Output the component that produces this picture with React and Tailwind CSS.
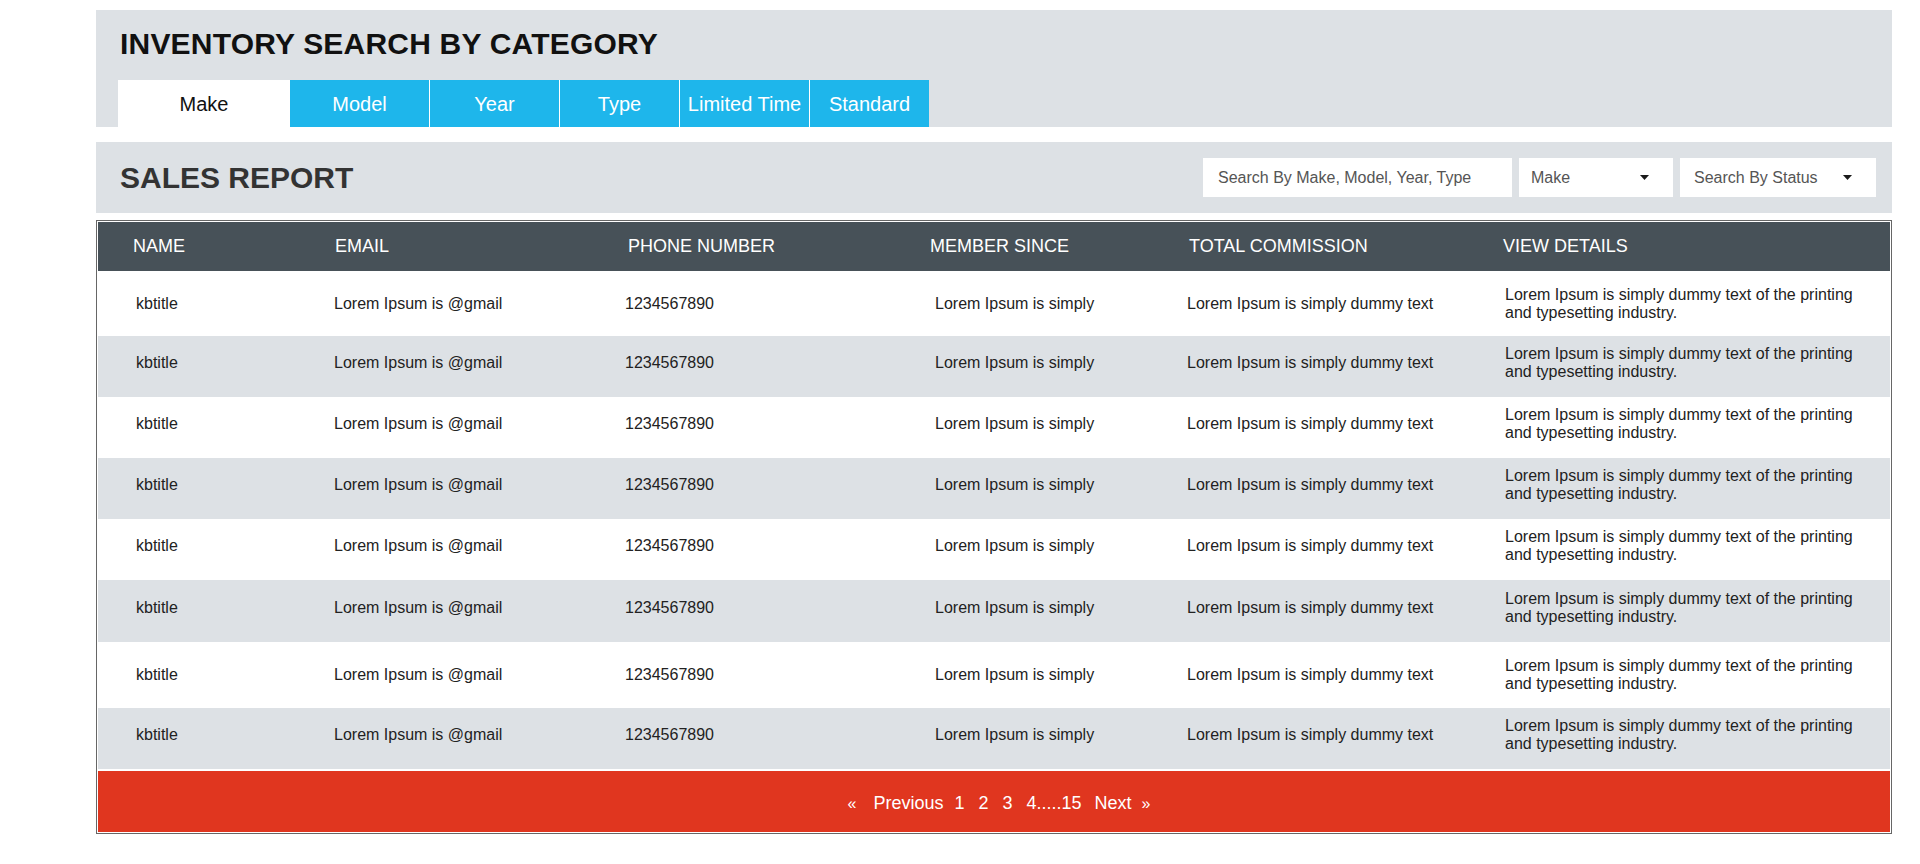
import { useState } from "react";

const tabs = [
  { label: "Make", width: "w-[172px]" },
  { label: "Model", width: "w-[139px]" },
  { label: "Year", width: "w-[130px]" },
  { label: "Type", width: "w-[120px]" },
  { label: "Limited Time", width: "w-[130px]" },
  { label: "Standard", width: "w-[120px]" },
];

const headers = [
  { label: "NAME", pad: "pl-[35px]" },
  { label: "EMAIL", pad: "pl-[1px]" },
  { label: "PHONE NUMBER", pad: "pl-[3px]" },
  { label: "MEMBER SINCE", pad: "pl-[2px]" },
  { label: "TOTAL COMMISSION", pad: "pl-[2px]" },
  { label: "VIEW DETAILS", pad: "pl-0" },
];

// row heights differ slightly in the design
const rows = [
  "h-[65px]",
  "h-[61px] pb-[7px]",
  "h-[61px] pb-[7px]",
  "h-[61px] pb-[7px]",
  "h-[61px] pb-[7px]",
  "h-[62px] pb-[7px]",
  "h-[66px]",
  "h-[61px] pb-[7px]",
];

const cols = "grid grid-cols-[236px_291px_303px_259px_316px_1fr]";

const Caret = () => (
  <svg width="9" height="5" viewBox="0 0 9 5" className="shrink-0">
    <path d="M0 0h9L4.5 5z" fill="#1a1a1a" />
  </svg>
);

const App = () => {
  const [active, setActive] = useState("Make");
  const [query, setQuery] = useState("");

  return (
    <div className="min-h-screen bg-white pl-[96px] pr-[28px] pt-[10px] font-['Liberation_Sans',Arial,sans-serif]">
      {/* category panel */}
      <div className="bg-[#dde1e5] px-[22px] pt-[16px]">
        <h1 className="ml-[2px] text-[30px] leading-[36px] font-bold tracking-[0.2px] text-[#111]">
          INVENTORY SEARCH BY CATEGORY
        </h1>
        <div className="mt-[18px] flex h-[47px]">
          {tabs.map((tab, i) => (
            <button
              key={tab.label}
              onClick={() => setActive(tab.label)}
              className={`${tab.width} h-full flex items-center justify-center text-[20px] ${
                active === tab.label
                  ? "bg-white text-[#111]"
                  : "bg-[#1eb6eb] text-white"
              } ${i > 1 ? "border-l border-white" : ""}`}
            >
              {tab.label}
            </button>
          ))}
        </div>
      </div>

      {/* sales report header */}
      <div className="mt-[15px] h-[71px] bg-[#dde1e5] pl-[24px] pr-[16px] flex items-center justify-between">
        <h2 className="text-[30px] font-bold text-[#333]">SALES REPORT</h2>
        <div className="flex items-center gap-[7px]">
          <input
            value={query}
            onChange={(e) => setQuery(e.target.value)}
            placeholder="Search By Make, Model, Year, Type"
            className="w-[309px] h-[39px] bg-white px-[15px] text-[16px] text-[#555] placeholder:text-[#555] outline-none"
          />
          <div className="w-[154px] h-[39px] bg-white pl-[12px] pr-[24px] flex items-center justify-between text-[16px] text-[#555]">
            <span>Make</span>
            <Caret />
          </div>
          <div className="w-[196px] h-[39px] bg-white pl-[14px] pr-[24px] flex items-center justify-between text-[16px] text-[#555]">
            <span>Search By Status</span>
            <Caret />
          </div>
        </div>
      </div>

      {/* table */}
      <div className="mt-[7px] border border-[#666] bg-white p-px">
        <div className={`${cols} h-[49px] items-center bg-[#475158] text-white text-[18px]`}>
          {headers.map((h) => (
            <div key={h.label} className={h.pad}>
              {h.label}
            </div>
          ))}
        </div>

        {rows.map((h, i) => (
          <div
            key={i}
            className={`${cols} ${h} items-center text-[16px] text-[#222] ${
              i % 2 === 1 ? "bg-[#dde1e5]" : "bg-white"
            }`}
          >
            <div className="pl-[38px]">kbtitle</div>
            <div>Lorem Ipsum is @gmail</div>
            <div>1234567890</div>
            <div className="pl-[7px]">Lorem Ipsum is simply</div>
            <div>Lorem Ipsum is simply dummy text</div>
            <div className="pl-[2px] w-[372px] leading-[18px]">
              Lorem Ipsum is simply dummy text of the printing and typesetting industry.
            </div>
          </div>
        ))}

        <div className="mt-[2px] h-[61px] pt-[4px] pl-[10px] bg-[#e0361f] flex items-center justify-center text-white text-[18px]">
          <span className="text-[16px] mr-[17px]">«</span>
          <span className="mr-[11px]">Previous</span>
          <span className="mr-[14px]">1</span>
          <span className="mr-[14px]">2</span>
          <span className="mr-[14px]">3</span>
          <span className="mr-[13px]">4.....15</span>
          <span className="mr-[10px]">Next</span>
          <span className="text-[16px]">»</span>
        </div>
      </div>
    </div>
  );
};

export default App;
